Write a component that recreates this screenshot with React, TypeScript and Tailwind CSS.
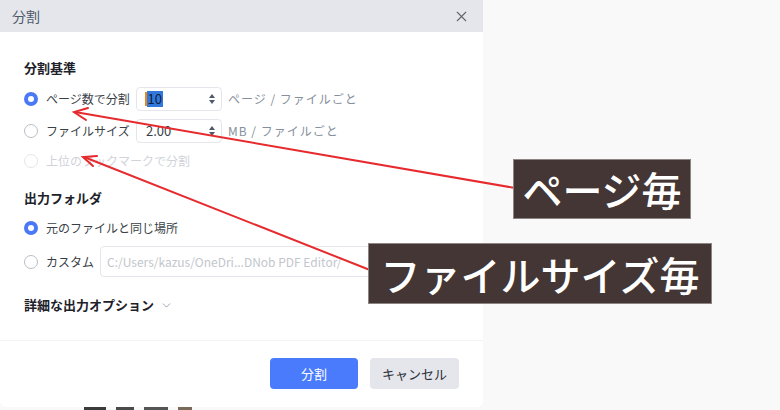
import { ChevronDown, X } from "lucide-react";

const FONT = { fontFamily: '"Noto Sans CJK JP", "Noto Sans", sans-serif' };

// Radio button circle
function Radio({ checked, disabled }: { checked?: boolean; disabled?: boolean }) {
  if (checked) {
    return <span className="w-[14px] h-[14px] rounded-full border-[4px] border-[#4a78f6] bg-white shrink-0" />;
  }
  return (
    <span
      className={`w-[14px] h-[14px] rounded-full border shrink-0 bg-white ${
        disabled ? "border-[#e5e6eb]" : "border-[#b9bec7]"
      }`}
    />
  );
}

function Spinner() {
  return (
    <span className="flex flex-col items-center gap-[2px] mr-[6px]">
      <span className="w-0 h-0 border-x-[3.5px] border-x-transparent border-b-[4px] border-b-[#4e5969]" />
      <span className="w-0 h-0 border-x-[3.5px] border-x-transparent border-t-[4px] border-t-[#4e5969]" />
    </span>
  );
}

export default function App() {
  return (
    <div className="relative w-[780px] h-[410px] overflow-hidden bg-[#f9f9fa]" style={FONT}>
      {/* Dialog */}
      <div className="w-[483px] h-[407px] bg-white rounded-b-[6px] flex flex-col">
        <div className="h-8 bg-[#e5e6eb] flex items-center justify-between pl-3 pr-[13px]">
          <span className="text-[14px] text-[#4e5969]">分割</span>
          <X size={17} strokeWidth={1.5} className="text-[#5f6670]" />
        </div>

        <div className="flex-1 pl-6 pt-[26px] text-[12px] text-[#3a3f47]">
          <div className="h-5 flex items-center text-[13px] font-bold text-[#1d2129]">分割基準</div>

          <div className="mt-[9px] h-6 flex items-center">
            <Radio checked />
            <span className="ml-2 w-[90px]">ページ数で分割</span>
            <div className="w-[86px] h-6 border border-[#e5e6eb] rounded-[4px] flex items-center justify-between pl-[8px]">
              <span className="relative flex items-center">
                <span className="w-[1.5px] h-[14px] bg-[#e8891c]" />
                <span className="bg-[#3278dc] text-[#10203a] text-[13px] leading-[16px] px-[1px]">10</span>
              </span>
              <Spinner />
            </div>
            <span className="ml-[6px] text-[#86909c] tracking-[1px]">ページ / ファイルごと</span>
          </div>

          <div className="mt-2 h-6 flex items-center">
            <Radio />
            <span className="ml-2 w-[90px]">ファイルサイズ</span>
            <div className="w-[86px] h-6 border border-[#e5e6eb] rounded-[4px] flex items-center justify-between pl-[9px]">
              <span className="text-[13px]">2.00</span>
              <Spinner />
            </div>
            <span className="ml-[6px] text-[#86909c] tracking-[1px]">MB / ファイルごと</span>
          </div>

          <div className="mt-[6px] h-6 flex items-center">
            <Radio disabled />
            <span className="ml-2 text-[#d0d3d9]">上位のブックマークで分割</span>
          </div>

          <div className="mt-[15px] h-5 flex items-center text-[13px] font-bold text-[#1d2129]">出力フォルダ</div>

          <div className="mt-2 h-6 flex items-center">
            <Radio checked />
            <span className="ml-2">元のファイルと同じ場所</span>
          </div>

          <div className="mt-[6px] h-[31px] flex items-center">
            <Radio />
            <span className="ml-2">カスタム</span>
            <div className="ml-[6px] w-[360px] h-[31px] border border-[#e5e6eb] rounded-[4px] flex items-center pl-[6px] text-[#c2c6cc] text-[12px] overflow-hidden whitespace-nowrap">
              C:/Users/kazus/OneDri...DNob PDF Editor/
            </div>
          </div>

          <div className="mt-[18px] h-5 flex items-center text-[13px] font-bold text-[#1d2129]">
            詳細な出力オプション
            <ChevronDown size={13} strokeWidth={1.5} className="ml-[6px] text-[#86909c]" />
          </div>
        </div>

        <div className="border-t border-[#f2f3f5] h-[67px] flex items-start justify-end gap-3 pr-6 pt-[17px]">
          <button className="w-[88px] h-[31px] rounded-[4px] bg-[#4a7bfc] text-white text-[13px]">分割</button>
          <button className="w-[89px] h-[31px] rounded-[4px] bg-[#e5e6eb] text-[#2b2f36] text-[13px]">キャンセル</button>
        </div>
      </div>

      {/* content behind the dialog at the very bottom */}
      <div className="flex gap-[10px] pl-[84px] h-[3px]">
        <span className="w-[22px] bg-[#3b3b3b]" />
        <span className="w-[18px] bg-[#4a4a4a]" />
        <span className="w-[24px] bg-[#555]" />
        <span className="w-[14px] bg-[#7a6a5a]" />
      </div>

      {/* Annotation arrows */}
      <svg className="absolute inset-0 pointer-events-none" width="780" height="410">
        <g stroke="#e62a2e" strokeWidth="2" fill="none" strokeLinecap="round">
          <line x1="515" y1="188" x2="75" y2="112" />
          <polyline points="88,108 74,112 86,120" />
          <line x1="375" y1="272" x2="84" y2="157" />
          <polyline points="97,156 83,157 93,166" />
        </g>
      </svg>

      {/* Annotation labels */}
      <div className="absolute left-[513px] top-[159px] w-[178px] h-[60px] bg-[#433634] border border-[#8d8583] flex items-center justify-center text-white text-[40px] font-medium leading-none">
        ページ毎
      </div>
      <div className="absolute left-[368px] top-[243px] w-[344px] h-[61px] bg-[#433634] border border-[#8d8583] flex items-center justify-center text-white text-[40px] font-medium leading-none">
        ファイルサイズ毎
      </div>
    </div>
  );
}
